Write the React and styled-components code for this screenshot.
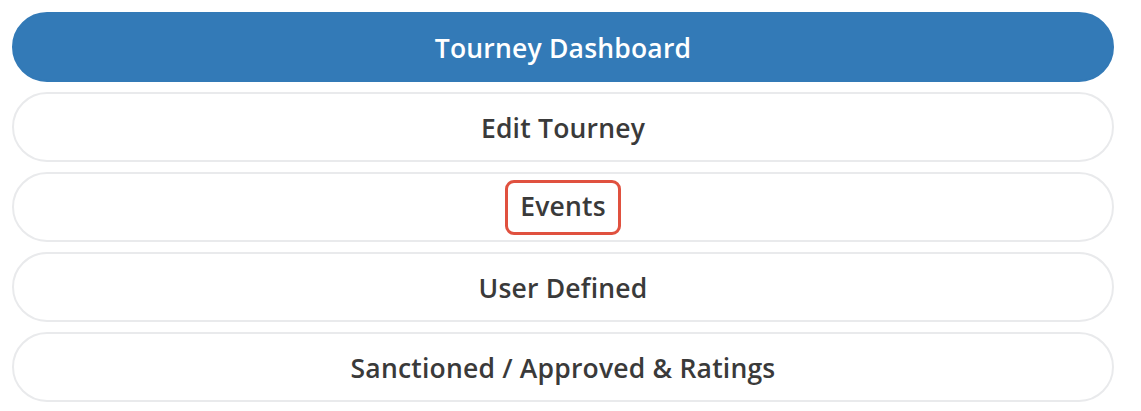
import styled, { createGlobalStyle } from 'styled-components';

const GlobalStyle = createGlobalStyle`
  body {
    margin: 0;
    background: #ffffff;
    font-family: "Open Sans", "Liberation Sans", sans-serif;
  }
`;

// styled components
const Menu = styled.nav`
  display: flex;
  flex-direction: column;
  gap: 10px;
  padding: 12px 27px 10px 12px;
`;

const MenuButton = styled.button`
  display: flex;
  align-items: center;
  justify-content: center;
  height: 70px;
  width: 100%;
  padding-top: 2px;
  border-radius: 35px;
  border: 2px solid ${props => props.$active ? '#337ab7' : '#e9eaec'};
  background-color: ${props => props.$active ? '#337ab7' : '#ffffff'};
  color: ${props => props.$active ? '#ffffff' : '#3a3a3a'};
  font-family: inherit;
  font-size: 26.5px;
  font-weight: 600;
  letter-spacing: 0.2px;
  cursor: pointer;
`;

const Highlight = styled.span`
  display: inline-block;
  padding: 8px 12px 9px;
  border: 3px solid #e0513f;
  border-radius: 9px;
  line-height: 1.2;
`;

const items = [
  { label: 'Tourney Dashboard', active: true },
  { label: 'Edit Tourney' },
  { label: 'Events', highlight: true },
  { label: 'User Defined' },
  { label: 'Sanctioned / Approved & Ratings' },
];

// component
const App = () => {
  return (
    <>
      <GlobalStyle />
      <Menu>
        {items.map(item => (
          <MenuButton key={item.label} $active={item.active}>
            {item.highlight ? <Highlight>{item.label}</Highlight> : item.label}
          </MenuButton>
        ))}
      </Menu>
    </>
  );
}

export default App;
